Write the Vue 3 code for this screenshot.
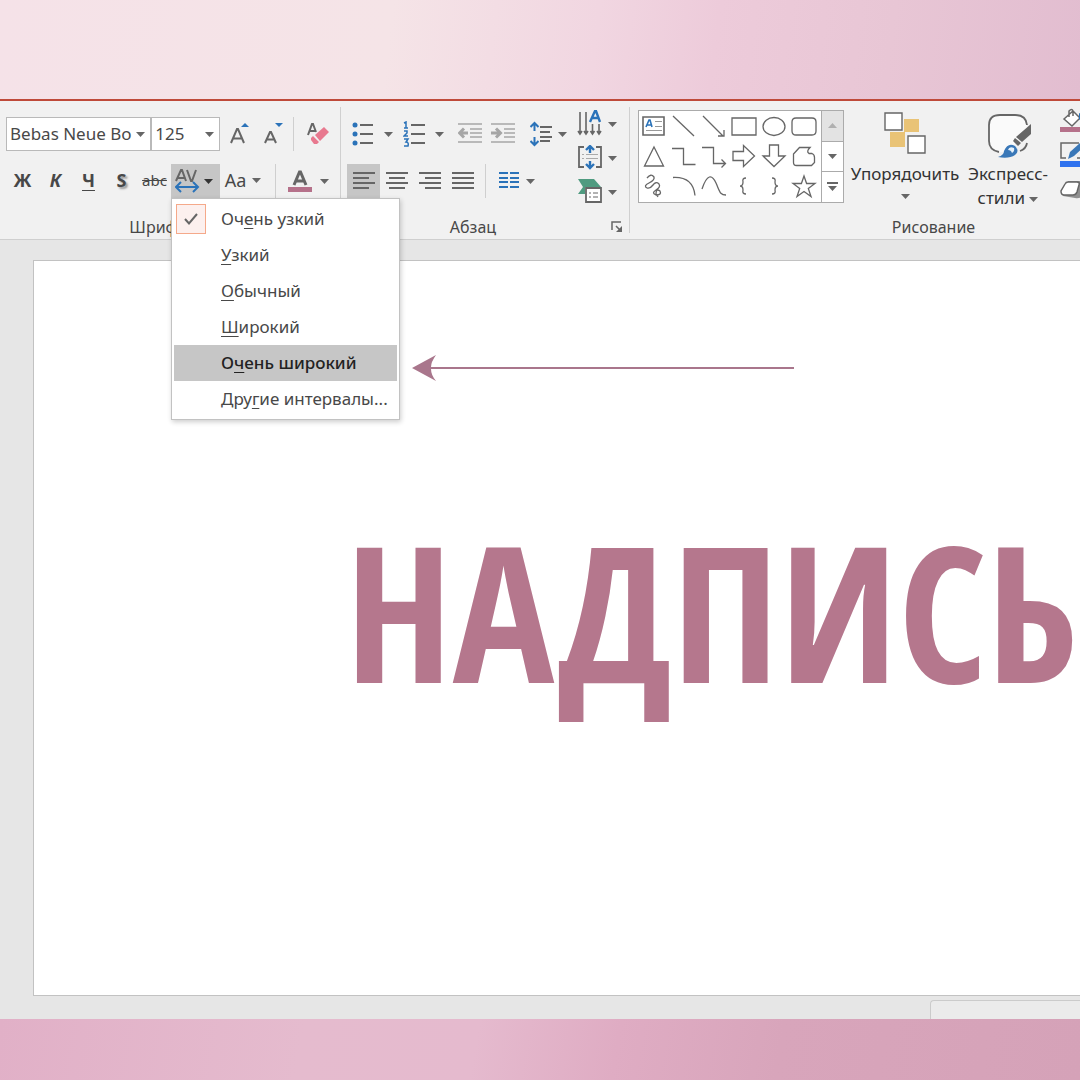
<script setup>
import { ref } from 'vue'

const font = ref('Bebas Neue Bo')
const size = ref('125')
const active = ref(4)
const checked = ref(0)

const spacings = [
  ['Оч', 'е', 'нь узкий'],
  ['', 'У', 'зкий'],
  ['', 'О', 'бычный'],
  ['', 'Ш', 'ирокий'],
  ['О', 'ч', 'ень широкий'],
  ['Дру', 'г', 'ие интервалы...'],
]

const aligns = [
  { name: 'По левому краю', d: 'M1 1h22M1 6h16M1 11h22M1 16h16' },
  { name: 'По центру', d: 'M1 1h22M4 6h16M1 11h22M4 16h16' },
  { name: 'По правому краю', d: 'M1 1h22M7 6h16M1 11h22M7 16h16' },
  { name: 'По ширине', d: 'M1 1h22M1 6h22M1 11h22M1 16h22' },
]

const shapes = [
  { name: 'Линия', d: 'M4 5l21 20' },
  { name: 'Стрелка', d: 'M4 5l20 20M25 19v6h-6' },
  { name: 'Прямоугольник', d: 'M3 7h24v17H3z' },
  { name: 'Овал', d: 'M4 15.500a11 9 0 1 0 22 0a11 9 0 1 0 -22 0z' },
  { name: 'Скругленный прямоугольник', d: 'M7 7h16q4 0 4 4v9q0 4-4 4H7q-4 0-4-4v-9q0-4 4-4z' },
  { name: 'Треугольник', d: 'M15 6l9.500 19h-19z' },
  { name: 'Соединитель', d: 'M3 7.500h11.500v16h12' },
  { name: 'Соединитель со стрелкой', d: 'M3 6.500h11.500v16h12M22.500 18.500l4 4-4 4' },
  { name: 'Стрелка вправо', d: 'M4 10.500h10.500v-6l11 10.500-11 10.500v-6H4z' },
  { name: 'Стрелка вниз', d: 'M10.500 4v11h-6.500l11 10.500 11-10.500h-6.500V4z' },
  { name: 'Фигура', d: 'M4.500 13l6-6.500h10.500q-4 4-1 6h3q2.500 1 2.500 4v5l-3 3h-15q-3 0-3-3z' },
  { name: 'Рисованная кривая', d: 'M8 7q4-5 7-1q1 3-5 6t-2 5q3 1 6-3t6-1q2 3-3 6t0 5q6 0 4-4q-4-3-4 3l2 3' },
  { name: 'Дуга', d: 'M4 6.500q20-1 22 18' },
  { name: 'Кривая', d: 'M3 18C8 3 13 3 17 12s4 12 10 12' },
  { name: 'Левая скобка', d: 'M17 7q-4 0-3 4q0 4-3 4q3 0 3 4q-1 4 3 4' },
  { name: 'Правая скобка', d: 'M13 7q4 0 3 4q0 4 3 4q-3 0-3 4q1 4-3 4' },
  { name: 'Звезда', d: 'M15 5l2.600 7.500h8.400l-6.700 5 2.700 8-7-5-7 5 2.700-8-6.700-5h8.400z' },
]
</script>

<template>
  <div class="stage">
    <div class="band band-top"></div>
    <main class="window">
      <div class="ribbon">
        <section class="group group-font">
          <div class="row">
            <label class="combo combo-font">
              <select v-model="font" aria-label="Шрифт"><option>Bebas Neue Bo</option></select>
              <svg class="caret" viewBox="0 0 9 5"><path d="M0 0h9L4.500 5z" /></svg>
            </label>
            <label class="combo combo-size">
              <select v-model="size" aria-label="Размер шрифта"><option>125</option></select>
              <svg class="caret" viewBox="0 0 9 5"><path d="M0 0h9L4.500 5z" /></svg>
            </label>
            <button class="btn w34" aria-label="Увеличить размер шрифта">
              <svg width="24" height="24" viewBox="0 0 24 24"><path class="ln2" d="M6 21l6-14h1l6 14M8 16.500h9" /><path class="blue" d="M16 5l4-4 4 4z" /></svg>
            </button>
            <button class="btn w34" aria-label="Уменьшить размер шрифта">
              <svg width="24" height="24" viewBox="0 0 24 24"><path class="ln2" d="M6 21l5-11h1l5 11M8 17.500h7" /><path class="blue" d="M16 1h8l-4 4z" /></svg>
            </button>
            <span class="sep"></span>
            <button class="btn w46" aria-label="Очистить формат">
              <svg width="24" height="24" viewBox="0 0 24 24"><path class="ln" stroke-width="2" d="M3 13l4-11h1l3 8M5 9h5" /><path d="M10 13l9-8 5 5-9 9zM6 16l2-2 6 6-2 2H9l-3-4z" fill="#e8798f" /></svg>
            </button>
          </div>
          <div class="row">
            <button class="btn w33 letter b">Ж</button>
            <button class="btn w33 letter b i">К</button>
            <button class="btn w33 letter b u">Ч</button>
            <button class="btn w33 letter b shadow">S</button>
            <button class="btn w33 strike">abc</button>
            <div class="anchor">
              <button class="btn on av" aria-haspopup="menu" aria-label="Межзнаковый интервал">
                <svg width="26" height="26" viewBox="0 0 26 26"><path class="ln2" d="M1 13L6 2h1l4 11M3 10h7M12 2l4 11h1l4-11" /><path class="bl" stroke-width="2" d="M1 19h22M6 14l-5 5 5 5M18 14l5 5-5 5" /></svg>
                <svg class="caret dark" viewBox="0 0 9 5"><path d="M0 0h9L4.500 5z" /></svg>
              </button>
              <ul class="menu" role="menu">
                <li v-for="(s, n) in spacings" :key="n" role="none">
                  <button role="menuitem" :class="{ active: n === active }" @mouseenter="active = n" @click="checked = n">
                    <span class="tick" :class="{ on: n === checked }">
                      <svg v-if="n === checked" width="14" height="14" viewBox="0 0 14 14"><path class="ln2" d="M1 7l4 4.500L13 2" /></svg>
                    </span>
                    <span class="name">{{ s[0] }}<u>{{ s[1] }}</u>{{ s[2] }}</span>
                  </button>
                </li>
              </ul>
            </div>
            <button class="btn w46 aa" aria-label="Регистр">
              <span>Aa</span>
              <svg class="caret" viewBox="0 0 9 5"><path d="M0 0h9L4.500 5z" /></svg>
            </button>
            <span class="sep wide"></span>
            <button class="btn color" aria-label="Цвет текста">
              <svg width="24" height="24" viewBox="0 0 24 24"><path class="ln3" d="M6 16L11.500 3h1L18 16M8 12h8" /><path d="M0 18h24v5H0z" fill="#b5718a" /></svg>
              <svg class="caret" viewBox="0 0 9 5"><path d="M0 0h9L4.500 5z" /></svg>
            </button>
          </div>
          <div class="caption">Шрифт</div>
        </section>

        <section class="group group-par">
          <div class="par">
            <div class="par-main">
              <div class="row">
                <button class="btn split" aria-label="Маркеры">
                  <svg width="22" height="24" viewBox="0 0 22 24"><circle class="blue" cx="3" cy="3" r="2.500" /><circle class="blue" cx="3" cy="12" r="2.500" /><circle class="blue" cx="3" cy="21" r="2.500" /><path class="ln2" d="M8 3h13M8 12h13M8 21h13" /></svg>
                  <svg class="caret" viewBox="0 0 9 5"><path d="M0 0h9L4.500 5z" /></svg>
                </button>
                <button class="btn split" aria-label="Нумерация">
                  <svg width="22" height="26" viewBox="0 0 22 26"><path class="bl" d="M1 2l2-1v6M1 7h4M1 10h3v2l-3 3h4M1 18h4l-2 3q3 0 2 4H1" stroke-width="1.500" /><path class="ln2" d="M8 4h14M8 13h14M8 22h14" /></svg>
                  <svg class="caret" viewBox="0 0 9 5"><path d="M0 0h9L4.500 5z" /></svg>
                </button>
                <button class="btn w33 indent" aria-label="Уменьшить отступ">
                  <svg width="24" height="24" viewBox="0 0 24 24"><path class="dim" d="M0 2h24M12 7h12M12 11h12M12 15h12M0 20h24" /><path class="dimbold" d="M10 11H3M6 6.500L1.500 11 6 15.500" /></svg>
                </button>
                <button class="btn w33" aria-label="Увеличить отступ">
                  <svg width="24" height="24" viewBox="0 0 24 24"><path class="dim" d="M0 2h24M13 7h11M13 11h11M13 15h11M0 20h24" /><path class="dimbold" d="M0 11h8M5 6.500L9.500 11 5 15.500" /></svg>
                </button>
                <button class="btn split spacing" aria-label="Междустрочный интервал">
                  <svg width="22" height="26" viewBox="0 0 22 26"><path class="bl" stroke-width="2" d="M4.500 2v8M4.500 16v8M.500 6l4-4 4 4M.500 20l4 4 4-4" /><path class="ln2" d="M10 6h12M10 11h10M10 16h12M10 20h10" /></svg>
                  <svg class="caret" viewBox="0 0 9 5"><path d="M0 0h9L4.500 5z" /></svg>
                </button>
              </div>
              <div class="row">
                <button v-for="(a, n) in aligns" :key="a.name" class="btn w33" :class="{ on: n === 0 }" :aria-label="a.name">
                  <svg width="24" height="18" viewBox="0 0 24 18"><path class="ln2" :d="a.d" /></svg>
                </button>
                <span class="sep par-sep"></span>
                <button class="btn cols" aria-label="Колонки">
                  <svg width="22" height="20" viewBox="0 0 22 20"><path class="bl" stroke-width="2" d="M1 2h9M12 2h9M1 7h9M12 7h9M1 11h9M12 11h9M1 16h9M12 16h9" /></svg>
                  <svg class="caret" viewBox="0 0 9 5"><path d="M0 0h9L4.500 5z" /></svg>
                </button>
              </div>
            </div>
            <div class="par-side">
              <button class="btn side" aria-label="Направление текста">
                <svg width="26" height="28" viewBox="0 0 26 28"><path class="ln" stroke-width="1.600" d="M3 2v22M9 2v22M15.500 14v10M22 14v10M1 21l2 3 2-3M7 21l2 3 2-3M13.500 21l2 3 2-3M20 21l2 3 2-3" /><path class="bl" stroke-width="2.400" d="M13 12l5-11h1l4 11M15 8h7" /></svg>
                <svg class="caret" viewBox="0 0 9 5"><path d="M0 0h9L4.500 5z" /></svg>
              </button>
              <button class="btn side" aria-label="Выровнять текст">
                <svg width="26" height="26" viewBox="0 0 26 26"><path class="ln" stroke-width="1.800" d="M7 2H2v20h5M19 2h5v20h-5" /><path stroke="#aaa" d="M5 9.500h2M9 9.500h12M5 13.500h2M9 13.500h12" /><path class="bl" stroke-width="2.400" d="M13 1v7M13 16v7M9 5l4-4 4 4M9 19l4 4 4-4" /></svg>
                <svg class="caret" viewBox="0 0 9 5"><path d="M0 0h9L4.500 5z" /></svg>
              </button>
              <button class="btn side" aria-label="Преобразовать в SmartArt">
                <svg width="26" height="26" viewBox="0 0 26 26"><path d="M1 0h16l7 8H8v7H1l5-7z" fill="#4f9b80" /><path d="M9 9h15v14H9z" fill="#fff" stroke="#666" stroke-width="1.800" /><path class="ln" d="M12 14h2M16 14h5M12 18h2M16 18h5" /></svg>
                <svg class="caret" viewBox="0 0 9 5"><path d="M0 0h9L4.500 5z" /></svg>
              </button>
            </div>
          </div>
          <div class="caption">
            <span>Абзац</span>
            <button class="launcher" aria-label="Параметры абзаца">
              <svg width="12" height="12" viewBox="0 0 12 12"><path class="ln" stroke-width="1.500" d="M1 9V1h9M5 5l5 5" /><path d="M11 5v6H5z" fill="#666" /></svg>
            </button>
          </div>
        </section>

        <section class="group group-draw">
          <div class="draw">
            <div class="gallery">
              <div class="shapes">
                <button aria-label="Надпись">
                  <svg width="30" height="30" viewBox="0 0 30 30"><path class="ln" stroke-width="1.600" d="M4 6h21v18H4z" /><path class="bl" stroke-width="1.600" d="M7 16l3-7h1l2 7M8 14h5" /><path stroke="#999" d="M16 10.500h7M16 15.500h7M7 19.500h16" /></svg>
                </button>
                <button v-for="s in shapes" :key="s.name" :aria-label="s.name">
                  <svg width="30" height="30" viewBox="0 0 30 30"><path class="ln" stroke-width="1.300" :d="s.d" /></svg>
                </button>
              </div>
              <div class="scroller">
                <button disabled aria-label="Вверх"><svg class="caret" viewBox="0 0 9 5"><path d="M0 5h9L4.500 0z" /></svg></button>
                <button aria-label="Вниз"><svg class="caret" viewBox="0 0 9 5"><path d="M0 0h9L4.500 5z" /></svg></button>
                <button aria-label="Дополнительно"><svg width="11" height="10" viewBox="0 0 11 10"><path d="M0 0h11v2H0zM1 4h9l-4.500 5z" fill="#666" /></svg></button>
              </div>
            </div>
            <button class="big arrange">
              <svg width="42" height="42" viewBox="0 0 42 42"><path d="M20 7h15v13H21v15H6V20h14z" fill="#e9c376" /><path d="M1 1h17v17H1zM24 24h17v17H24z" fill="#fff" stroke="#666" stroke-width="1.400" /></svg>
              <span>Упорядочить</span>
              <svg class="caret" viewBox="0 0 9 5"><path d="M0 0h9L4.500 5z" /></svg>
            </button>
            <button class="big styles">
              <svg width="46" height="46" viewBox="0 0 46 46"><path d="M14 40Q4 38 4 29V13Q4 3 15 3h15q11 0 12 10v4L24 40z" fill="#fafafa" /><path class="ln" stroke-width="1.800" d="M14 40Q4 38 4 29V13Q4 3 15 3h15q11 0 12 10M42 31q-1 6-7 8" /><path d="M46 12v10l-9 8-6-5zM30 26l6 5-3 3-5-5z" fill="#666" /><path d="M13 45q6-2 6-6q4-9 11-5q5 5 0 9-6 4-17 2z" fill="#3a78b8" /><path d="M23 38q1-4 6-2 1 3-2 5-1-3-4-3z" fill="#e5f1fb" /></svg>
              <span>Экспресс-<br />стили <svg class="caret mid" viewBox="0 0 9 5"><path d="M0 0h9L4.500 5z" /></svg></span>
            </button>
            <div class="fx">
              <button aria-label="Заливка фигуры">
                <svg width="28" height="26" viewBox="0 0 28 26"><path d="M4 12l9-8 7 7-8 8z" fill="#fff" /><path class="ln" stroke-width="1.500" d="M4 12l9-8 7 7-8 8zM9 10V4q3-3 4 0v5" /><path class="blue" d="M19 6q6 2 4 10l-4-4z" /><path d="M0 20h27v5H0z" fill="#b5718a" /></svg>
              </button>
              <button aria-label="Контур фигуры">
                <svg width="28" height="26" viewBox="0 0 28 26"><path class="ln" stroke-width="1.500" d="M19 2H1v15h5M22 12v5h-5" /><path d="M8 18l2-7 10-9 4 4-10 9z" fill="#3a78b8" /><path d="M0 20h27v6H0z" fill="#2f72ee" /></svg>
              </button>
              <button aria-label="Эффекты фигуры">
                <svg width="28" height="26" viewBox="0 0 28 26"><path d="M8 6h12q4 0 4 4l-1 10q-2 4-8 3L3 21z" fill="#909090" /><path d="M8 7h9q3 0 2 3l-2 7q-1 3-4 3H4q-3 0-3-4l4-7q1-2 3-2z" fill="#fff" stroke="#666" stroke-width="1.500" /></svg>
              </button>
            </div>
          </div>
          <div class="caption">Рисование</div>
        </section>
      </div>

      <div class="workspace">
        <article class="slide">
          <svg class="pointer" width="383" height="28" viewBox="0 0 383 28"><path d="M0 14L24 1q-5 7-5 12h363v2H19q0 6 5 12z" fill="#a9768c" /></svg>
          <h1>НАДПИСЬ</h1>
        </article>
        <div class="notes"></div>
      </div>
    </main>
    <div class="band band-bottom"></div>
  </div>
</template>

<style>
body {
  margin: 0;
}
</style>

<style scoped>
* {
  box-sizing: border-box;
}
.stage {
  display: flex;
  flex-direction: column;
  min-height: 100vh;
  overflow: hidden;
  font-family: "Noto Sans", "Open Sans", sans-serif;
  font-size: 17px;
  color: #484848;
}
.band {
  flex: none;
}
.band-top {
  height: 99px;
  background: linear-gradient(97deg, #f5e2e8 0%, #f5e4e7 36%, #f1d6e1 55%, #edcbda 66%, #e8c6d5 82%, #e2bdd0 100%);
}
.band-bottom {
  height: 61px;
  background: linear-gradient(100deg, #e1b0c7 0%, #e5bbce 28%, #e5bace 44%, #dfacc3 57%, #d8a5bb 72%, #d5a2b8 100%);
}
.window {
  display: flex;
  flex: 1;
  flex-direction: column;
  background: #e6e6e6;
}
.ribbon {
  display: flex;
  height: 141px;
  padding-top: 6px;
  background: #f1f1f1;
  border-top: 2px solid #bf4a3a;
  border-bottom: 1px solid #cfcfcf;
}
.group {
  display: flex;
  flex: none;
  flex-direction: column;
  height: 126px;
  border-right: 1px solid #d0d0d0;
}
.group-font {
  width: 341px;
  padding: 10px 0 0 6px;
  gap: 13px;
}
.row {
  display: flex;
  align-items: center;
  height: 34px;
}
button {
  font: inherit;
  color: inherit;
  background: none;
  border: 0;
  padding: 0;
}
svg {
  flex: none;
}
.btn {
  display: flex;
  flex: none;
  align-items: center;
  justify-content: center;
  height: 34px;
}
.w33 { width: 33px; }
.w34 { width: 34px; }
.w46 { width: 46px; }
.on {
  background: #c6c6c6;
}
.caret {
  width: 9px;
  height: 5px;
  fill: #666;
}
.caret.dark {
  fill: #333;
}
.caret.mid {
  vertical-align: middle;
}
.sep {
  width: 1px;
  height: 34px;
  margin-left: 5px;
  background: #cfcfcf;
}
.sep.wide {
  margin: 0 0 0 9px;
}
.ln {
  fill: none;
  stroke: #666;
}
.ln2 {
  fill: none;
  stroke: #666;
  stroke-width: 2;
}
.ln3 {
  fill: none;
  stroke: #666;
  stroke-width: 3;
}
.blue {
  fill: #2b73b9;
}
.bl {
  fill: none;
  stroke: #2b73b9;
}
.dim {
  fill: none;
  stroke: #b9b9b9;
  stroke-width: 2;
}
.dimbold {
  fill: none;
  stroke: #a6a6a6;
  stroke-width: 3;
}
.combo {
  display: flex;
  align-items: center;
  height: 34px;
  padding-right: 5px;
  background: #fff;
  border: 1px solid #b9b9b9;
}
.combo select {
  flex: 1;
  min-width: 0;
  height: 32px;
  padding: 0 0 1px 3px;
  font: inherit;
  color: #484848;
  background: none;
  border: 0;
  appearance: none;
}
.combo-font { width: 146px; }
.combo-size { width: 69px; }
.letter {
  padding-bottom: 2px;
  font-size: 18px;
}
.b { font-weight: 700; }
.i { font-style: italic; }
.u { text-decoration: underline; text-underline-offset: 3px; }
.shadow { text-shadow: 2px 2px 2px #999; }
.strike {
  padding-bottom: 2px;
  font-size: 15px;
  text-decoration: line-through;
}
.anchor {
  position: relative;
  z-index: 2;
}
.av {
  width: 49px;
  gap: 3px;
  padding-right: 3px;
}
.aa {
  gap: 6px;
  padding-bottom: 2px;
  font-size: 18px;
}
.color {
  width: 64px;
  gap: 8px;
}
.menu {
  position: absolute;
  top: 34px;
  left: 0;
  width: 229px;
  margin: 0;
  padding: 2px;
  list-style: none;
  background: #fff;
  border: 1px solid #c2c2c2;
  box-shadow: 1px 2px 5px #0003;
}
.menu button {
  display: flex;
  align-items: center;
  width: 100%;
  height: 36px;
  gap: 15px;
  padding-left: 2px;
  text-align: left;
  white-space: nowrap;
}
.menu button.active {
  font-weight: 500;
  color: #222;
  background: #c6c6c6;
}
.name {
  padding-bottom: 2px;
}
.tick {
  display: flex;
  align-items: center;
  justify-content: center;
  width: 30px;
  height: 30px;
}
.tick.on {
  background: #fcf0ee;
  border: 1px solid #f5a98a;
}
.menu u {
  text-underline-offset: 3px;
}
.caption {
  display: flex;
  align-items: center;
  justify-content: center;
  height: 12px;
  margin-top: auto;
  font-size: 16px;
  line-height: 12px;
}
.group-font .caption {
  padding-right: 32px;
}
.group-par {
  width: 289px;
}
.par {
  display: flex;
  justify-content: space-between;
}
.par-main {
  display: flex;
  flex-direction: column;
  gap: 13px;
  padding: 10px 0 0 6px;
}
.split {
  width: 51px;
  gap: 10px;
}
.indent {
  margin-left: 4px;
}
.spacing {
  gap: 6px;
  margin-left: 4px;
}
.par-sep {
  margin-left: 6px;
}
.cols {
  width: 60px;
  gap: 6px;
}
.par-side {
  display: flex;
  flex-direction: column;
  width: 52px;
}
.side {
  gap: 5px;
  justify-content: flex-start;
}
.group-par .caption span {
  flex: 1;
  text-align: center;
}
.launcher {
  display: flex;
  width: 24px;
  justify-content: center;
  align-items: center;
}
.group-draw {
  width: 608px;
}
.draw {
  display: flex;
  padding-left: 8px;
}
.gallery {
  display: flex;
  width: 206px;
  height: 93px;
  margin-top: 3px;
  background: #fff;
  border: 1px solid #ababab;
}
.shapes {
  display: grid;
  flex: 1;
  grid-template-columns: repeat(6, 30px);
  grid-template-rows: repeat(3, 30px);
}
.shapes button {
  display: flex;
}
.scroller {
  display: flex;
  flex-direction: column;
  width: 22px;
  border-left: 1px solid #ababab;
}
.scroller button {
  display: flex;
  flex: 1;
  align-items: center;
  justify-content: center;
  border-bottom: 1px solid #ababab;
}
.scroller button:last-child {
  border-bottom: 0;
}
.scroller button:disabled {
  background: #e3e3e3;
}
.scroller button:disabled .caret {
  fill: #b0b0b0;
}
.big {
  display: flex;
  flex-direction: column;
  align-items: center;
  padding-top: 5px;
  line-height: 24px;
  color: #333;
}
.arrange {
  width: 122px;
  gap: 8px;
}
.styles {
  width: 84px;
  gap: 4px;
}
.fx {
  display: flex;
  flex-direction: column;
  gap: 8px;
  padding-left: 10px;
}
.fx button {
  display: flex;
}
.workspace {
  display: flex;
  flex: 1;
  flex-direction: column;
  padding: 20px 0 0 33px;
}
.slide {
  position: relative;
  display: flex;
  flex: 1;
  align-items: center;
  margin-bottom: 4px;
  padding: 0 0 4px 311px;
  background: #fff;
  border: 1px solid #c2c2c2;
  border-right: 0;
}
.pointer {
  position: absolute;
  top: 93px;
  left: 378px;
}
.slide h1 {
  margin: 0;
  font-family: "Bebas Neue", "Open Sans Condensed", "Roboto Condensed", sans-serif;
  font-size: 190px;
  font-weight: 700;
  line-height: 1;
  white-space: nowrap;
  color: #b5778d;
}
.notes {
  align-self: flex-end;
  width: 150px;
  height: 19px;
  background: #ebebeb;
  border: 1px solid #cbcbcb;
  border-width: 1px 0 0 1px;
  border-radius: 4px 0 0 0;
}
</style>
